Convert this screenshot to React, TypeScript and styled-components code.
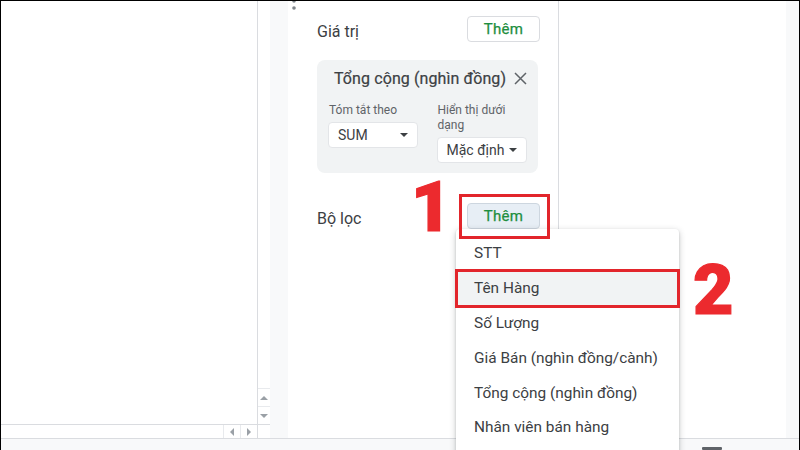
import React from "react";
import styled, { createGlobalStyle } from "styled-components";

const Global = createGlobalStyle`
  html, body { margin: 0; padding: 0; background: #fff; overflow: hidden; }
  body { font-family: Roboto, "Noto Sans", Arial, sans-serif; }
  * { box-sizing: border-box; }
`;

const Frame = styled.div`
  position: relative;
  width: 800px;
  height: 450px;
  border-top: 1px solid #000;
  border-left: 1px solid #000;
  border-right: 1px solid #000;
  display: grid;
  grid-template-rows: 1fr 12px;
  overflow: hidden;
  background: #fff;
`;

const Main = styled.div`
  display: flex;
  min-height: 0;
`;

const Sheet = styled.div`
  width: 269px;
  display: grid;
  grid-template-columns: 256px 13px;
  grid-template-rows: 1fr 14px;
`;

const Cells = styled.div`
  background: #fff;
`;

const VScroll = styled.div`
  border-left: 1px solid #dadce0;
  display: flex;
  flex-direction: column;
  justify-content: flex-end;
  background: #fff;
`;

const VBtn = styled.div`
  height: 18px;
  border-top: 1px solid #e8eaed;
  display: flex;
  align-items: center;
  justify-content: center;
`;

const HScroll = styled.div`
  border-top: 1px solid #dadce0;
  display: flex;
  justify-content: flex-end;
  background: #fff;
`;

const HBtn = styled.div`
  width: 17px;
  border-left: 1px solid #e8eaed;
  display: flex;
  align-items: center;
  justify-content: center;
`;

const Corner = styled.div`
  border-left: 1px solid #dadce0;
  border-top: 1px solid #dadce0;
`;

const Gutter = styled.div`
  width: 18px;
  background: #f8f9fa;
`;

const Panel = styled.div`
  position: relative;
  width: 271px;
  border-right: 1px solid #dadce0;
  background: #fff;
  padding: 15px 18px 0 29px;
  display: flex;
  flex-direction: column;
`;

const Handle = styled.svg`
  position: absolute;
  left: 2px;
  top: -4px;
`;

const Row = styled.div<{ $top: number }>`
  display: flex;
  justify-content: space-between;
  align-items: flex-start;
  margin-top: ${(p) => p.$top}px;
`;

const SectionLabel = styled.div`
  font-size: 16px;
  color: #3c4043;
  padding-top: 6px;
  line-height: 20px;
`;

const AddButton = styled.div<{ $active?: boolean }>`
  width: 73px;
  height: 26px;
  border-radius: 4px;
  border: 1px solid ${(p) => (p.$active ? "#cdd6df" : "#dadce0")};
  background: ${(p) => (p.$active ? "#e7eef5" : "#fff")};
  color: #1e8e3e;
  font-size: 15px;
  font-weight: 400;
  display: flex;
  align-items: center;
  justify-content: center;
  letter-spacing: 0.3px;
  -webkit-text-stroke: 0.25px #1e8e3e;
`;

const Card = styled.div`
  margin-top: 18px;
  width: 221px;
  height: 113px;
  border-radius: 8px;
  background: #f1f3f4;
  padding: 7px 11px 0 11px;
`;

const CardHead = styled.div`
  display: flex;
  align-items: center;
  justify-content: space-between;
  height: 22px;
  padding-left: 6px;
`;

const CardTitle = styled.div`
  font-size: 16px;
  color: #3c4043;
  white-space: nowrap;
  letter-spacing: 0.1px;
  -webkit-text-stroke: 0.2px #3c4043;
`;

const Cols = styled.div`
  margin-top: 14px;
  display: flex;
  gap: 19px;
  align-items: flex-start;
`;

const Col = styled.div<{ $w: number }>`
  width: ${(p) => p.$w}px;
  display: flex;
  flex-direction: column;
`;

const SmallLabel = styled.div`
  font-size: 12px;
  line-height: 15px;
  color: #5f6368;
  padding-left: 1px;
  margin-bottom: 4px;
`;

const Select = styled.div`
  height: 26px;
  background: #fff;
  border: 1px solid #e3e5e8;
  border-radius: 4px;
  display: flex;
  align-items: center;
  justify-content: space-between;
  padding: 0 9px 0 9px;
  font-size: 14px;
  color: #3c4043;
  white-space: nowrap;
`;

const RightArea = styled.div`
  flex: 1;
  background: #fff;
`;

const RightStrip = styled.div`
  width: 13px;
  background: #f8f9fa;
`;

const BottomBar = styled.div`
  border-top: 1px solid #dadce0;
  background: #f8f9fa;
  padding-left: 701px;
`;

const BottomIcon = styled.div`
  margin-top: 8px;
  width: 20px;
  height: 3px;
  background: #5f6368;
  border-radius: 1px;
`;

const Menu = styled.div`
  position: absolute;
  left: 455px;
  top: 228px;
  width: 223px;
  height: 240px;
  background: #fff;
  border-radius: 4px;
  box-shadow: 0 2px 6px rgba(60, 64, 67, 0.3), 0 1px 2px rgba(60, 64, 67, 0.2);
  padding-top: 7px;
`;

const MenuItem = styled.div<{ $hover?: boolean }>`
  height: 34.8px;
  display: flex;
  align-items: center;
  padding-left: 18px;
  font-size: 15.4px;
  color: #3c4043;
  background: ${(p) => (p.$hover ? "#f1f3f4" : "transparent")};
`;

const RedBox = styled.div<{ $x: number; $y: number; $w: number; $h: number }>`
  position: absolute;
  left: ${(p) => p.$x}px;
  top: ${(p) => p.$y}px;
  width: ${(p) => p.$w}px;
  height: ${(p) => p.$h}px;
  border: 3px solid #e2252b;
  pointer-events: none;
`;

const BigNum = styled.div<{ $x: number; $y: number }>`
  position: absolute;
  left: ${(p) => p.$x}px;
  top: ${(p) => p.$y}px;
  font-family: Roboto, "Liberation Sans", Arial, sans-serif;
  font-size: 70px;
  font-weight: 900;
  line-height: 70px;
  color: #ec2a2e;
  -webkit-text-stroke: 1.2px #ec2a2e;
`;

const Tri = ({ dir, size = 4, color = "#9aa0a6" }: { dir: "up" | "down" | "left" | "right"; size?: number; color?: string }) => {
  const s = size;
  const pts =
    dir === "up"
      ? `0,${s} ${s},0 ${2 * s},${s}`
      : dir === "down"
      ? `0,0 ${2 * s},0 ${s},${s}`
      : dir === "left"
      ? `${s},0 ${s},${2 * s} 0,${s}`
      : `0,0 0,${2 * s} ${s},${s}`;
  const w = dir === "up" || dir === "down" ? 2 * s : s;
  const h = dir === "up" || dir === "down" ? s : 2 * s;
  return (
    <svg width={w} height={h} viewBox={`0 0 ${w} ${h}`} style={{ flexShrink: 0 }}>
      <polygon points={pts} fill={color} />
    </svg>
  );
};

const Close = () => (
  <svg width="13" height="13" viewBox="0 0 13 13">
    <path d="M1 1 L12 12 M12 1 L1 12" stroke="#5f6368" strokeWidth="1.5" />
  </svg>
);

const items = [
  "STT",
  "Tên Hàng",
  "Số Lượng",
  "Giá Bán (nghìn đồng/cành)",
  "Tổng cộng (nghìn đồng)",
  "Nhân viên bán hàng",
];

export default function App() {
  return (
    <>
      <Global />
      <Frame>
        <Main>
          <Sheet>
            <Cells />
            <VScroll>
              <VBtn>
                <Tri dir="up" />
              </VBtn>
              <VBtn>
                <Tri dir="down" />
              </VBtn>
            </VScroll>
            <HScroll>
              <HBtn>
                <Tri dir="left" />
              </HBtn>
              <HBtn>
                <Tri dir="right" />
              </HBtn>
            </HScroll>
            <Corner />
          </Sheet>
          <Gutter />
          <Panel>
            <Handle width="8" height="16" viewBox="0 0 8 16">
              <circle cx="4" cy="4" r="1.8" fill="#80868b" />
              <circle cx="4" cy="11" r="1.8" fill="#80868b" />
            </Handle>
            <Row $top={0}>
              <SectionLabel>Giá trị</SectionLabel>
              <AddButton>Thêm</AddButton>
            </Row>
            <Card>
              <CardHead>
                <CardTitle>Tổng cộng (nghìn đồng)</CardTitle>
                <Close />
              </CardHead>
              <Cols>
                <Col $w={90}>
                  <SmallLabel>Tóm tắt theo</SmallLabel>
                  <Select>
                    SUM
                    <Tri dir="down" color="#3c4043" />
                  </Select>
                </Col>
                <Col $w={91}>
                  <SmallLabel>
                    Hiển thị dưới
                    <br />
                    dạng
                  </SmallLabel>
                  <Select>
                    Mặc định
                    <Tri dir="down" color="#3c4043" />
                  </Select>
                </Col>
              </Cols>
            </Card>
            <Row $top={30}>
              <SectionLabel>Bộ lọc</SectionLabel>
              <AddButton $active>Thêm</AddButton>
            </Row>
          </Panel>
          <RightArea />
          <RightStrip />
        </Main>
        <BottomBar>
          <BottomIcon />
        </BottomBar>

        <Menu>
          {items.map((t, i) => (
            <MenuItem key={t} $hover={i === 1}>
              {t}
            </MenuItem>
          ))}
        </Menu>

        <RedBox $x={458} $y={193} $w={91} $h={45} />
        <RedBox $x={454} $y={268} $w={225} $h={39} />
        <BigNum $x={410} $y={171}>1</BigNum>
        <BigNum $x={692} $y={254}>2</BigNum>
      </Frame>
    </>
  );
}
